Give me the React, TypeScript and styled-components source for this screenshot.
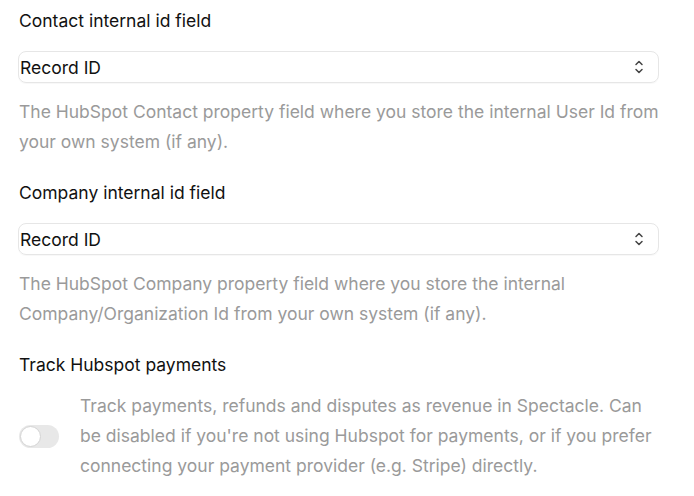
import React from "react";
import styled, { createGlobalStyle } from "styled-components";

const Global = createGlobalStyle`
  html, body { margin: 0; padding: 0; background: #ffffff; }
  body { font-family: Inter, "Noto Sans", sans-serif; -webkit-font-smoothing: antialiased; }
`;

const Page = styled.div`
  padding: 9px 35px 0 19px;
  display: flex;
  flex-direction: column;
`;

const Field = styled.section`
  display: flex;
  flex-direction: column;
  margin-bottom: 24px;
`;

const Label = styled.div`
  font-size: 17.5px;
  line-height: 24px;
  color: #111111;
  font-weight: 400;
`;

const SelectBox = styled.div`
  margin-top: 18px;
  margin-left: -1px;
  height: 32px;
  box-sizing: border-box;
  border: 1px solid #e6e6e6;
  border-radius: 8px;
  display: flex;
  align-items: center;
  justify-content: space-between;
  padding: 0 14px 0 1px;
  font-size: 17.5px;
  color: #111111;
  box-shadow: 0 1px 1px rgba(0, 0, 0, 0.03);
`;

const Help = styled.p`
  margin: 14px 0 0 0;
  font-size: 17.5px;
  line-height: 30px;
  color: #9a9a9a;
`;

const ToggleRow = styled.div`
  margin-top: 14px;
  display: flex;
  align-items: center;
  gap: 21px;
`;

const Track = styled.div`
  flex: none;
  width: 40px;
  height: 23px;
  border-radius: 12px;
  background: #e8e8e8;
  position: relative;
`;

const Knob = styled.div`
  position: absolute;
  left: 1px;
  top: 1px;
  width: 19px;
  height: 19px;
  border-radius: 50%;
  background: #ffffff;
  border: 1px solid #d4d4d4;
`;

const ToggleHelp = styled(Help)`
  margin: 0;
`;

const Chevrons = () => (
  <svg width="10" height="16" viewBox="0 0 10 16" fill="none" stroke="#444" strokeWidth="1.5" strokeLinecap="round" strokeLinejoin="round">
    <path d="M2 5.5 L5 2.5 L8 5.5" />
    <path d="M2 10.5 L5 13.5 L8 10.5" />
  </svg>
);

export default function App() {
  return (
    <>
      <Global />
      <Page>
        <Field>
          <Label>Contact internal id field</Label>
          <SelectBox>
            <span>Record ID</span>
            <Chevrons />
          </SelectBox>
          <Help>
            The HubSpot Contact property field where you store the internal User Id from your own system (if any).
          </Help>
        </Field>
        <Field>
          <Label>Company internal id field</Label>
          <SelectBox>
            <span>Record ID</span>
            <Chevrons />
          </SelectBox>
          <Help>
            The HubSpot Company property field where you store the internal Company/Organization Id from your own system (if any).
          </Help>
        </Field>
        <Field>
          <Label>Track Hubspot payments</Label>
          <ToggleRow>
            <Track>
              <Knob />
            </Track>
            <ToggleHelp>
              Track payments, refunds and disputes as revenue in Spectacle. Can be disabled if you're not using Hubspot for payments, or if you prefer connecting your payment provider (e.g. Stripe) directly.
            </ToggleHelp>
          </ToggleRow>
        </Field>
      </Page>
    </>
  );
}
